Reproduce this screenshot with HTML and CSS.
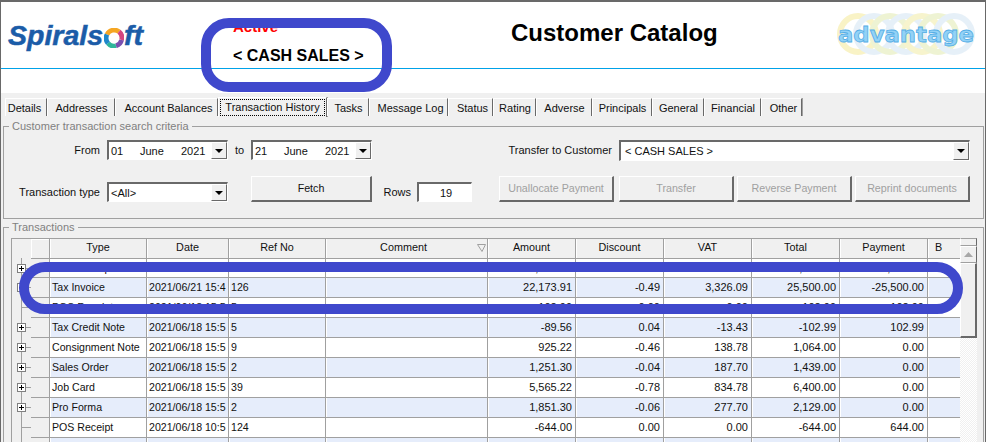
FILE: index.html
```html
<!DOCTYPE html>
<html lang="en">
<head>
<meta charset="utf-8">
<title>Customer Catalog</title>
<link rel="stylesheet" href="styles.css">
</head>
<body>
<div class="window">
  <header class="header">
    <div class="logo">Spirals<svg class="ring" width="20" height="20" viewBox="0 0 20 20"><g fill="none" stroke-width="4.8"><path d="M3 6.5A8 8 0 0 1 15 3.7" stroke="#f5a623"/><path d="M15 3.7A8 8 0 0 1 17.6 12" stroke="#d6457f"/><path d="M17.6 12A8 8 0 0 1 12 17.8" stroke="#7a4fb0"/><path d="M12 17.8A8 8 0 0 1 4 15.2" stroke="#2fb59a"/><path d="M4 15.2A8 8 0 0 1 3 6.5" stroke="#1e88c9"/></g></svg>ft</div>
    <div class="status">
      <div class="active">Active</div>
      <div class="customer">&lt; CASH SALES &gt;</div>
    </div>
    <h1 class="title">Customer Catalog</h1>
    <svg class="adv" width="144" height="42" viewBox="0 0 144 42">
      <g fill="none" stroke-width="6" opacity=".5">
        <circle cx="24" cy="21" r="18" stroke="#f4e88e"/>
        <circle cx="40" cy="21" r="18" stroke="#cfe3f3"/>
        <circle cx="56" cy="21" r="18" stroke="#dfe9a8"/>
        <circle cx="72" cy="21" r="18" stroke="#cfe3f3"/>
        <circle cx="88" cy="21" r="18" stroke="#f0ea9c"/>
        <circle cx="104" cy="21" r="18" stroke="#dfe9a8"/>
        <circle cx="120" cy="21" r="18" stroke="#cfe3f3"/>
      </g>
      <text class="adv-text" x="4" y="29" textLength="136" lengthAdjust="spacingAndGlyphs">advantage</text>
    </svg>
  </header>
  <div class="subhead"></div>

  <main class="main">
    <nav class="tabs">
      <span class="tab w42 shift-l">Details</span>
      <span class="tab w68">Addresses</span>
      <span class="tab w103 shift-r">Account Balances</span>
      <span class="tab w109 current"><span class="focus">Transaction History</span></span>
      <span class="tab w42">Tasks</span>
      <span class="tab w79 shift-r">Message Log</span>
      <span class="tab w45 shift-r">Status</span>
      <span class="tab w43">Rating</span>
      <span class="tab w56">Adverse</span>
      <span class="tab w60">Principals</span>
      <span class="tab w52">General</span>
      <span class="tab w57">Financial</span>
      <span class="tab w41 shift-r">Other</span>
    </nav>

    <section class="group criteria">
      <div class="legend">Customer transaction search criteria</div>
      <div class="row row-one">
        <label class="lbl w96">From</label>
        <div class="field w121"><span class="d">01</span><span class="m">June</span><span>2021</span><span class="drop"></span></div>
        <span class="to">to</span>
        <div class="field w121"><span class="d">21</span><span class="m">June</span><span>2021</span><span class="drop"></span></div>
        <label class="lbl w240">Transfer to Customer</label>
        <div class="field w351 tall"><span>&lt; CASH SALES &gt;</span><span class="drop"></span></div>
      </div>
      <div class="row row-two">
        <label class="lbl w96">Transaction type</label>
        <div class="field w121"><span>&lt;All&gt;</span><span class="drop"></span></div>
        <span class="to"></span>
        <button class="btn w121">Fetch</button>
        <label class="lbl w39">Rows</label>
        <div class="field input">19</div>
        <button class="btn w115 off">Unallocate Payment</button>
        <button class="btn w115 off g5">Transfer</button>
        <button class="btn w115 off g3">Reverse Payment</button>
        <button class="btn w115 off g3">Reprint documents</button>
      </div>
    </section>

    <section class="group transactions">
      <div class="legend">Transactions</div>
      <div class="grid-wrap">
        <table class="grid">
          <colgroup>
            <col class="c20"><col class="c18"><col class="c97"><col class="c82"><col class="c97"><col class="c162"><col class="c88"><col class="c88"><col class="c88"><col class="c88"><col class="c88"><col class="c33">
          </colgroup>
          <thead>
            <tr>
              <th class="tree-head"></th><th class="ind-head"></th><th>Type</th><th>Date</th><th>Ref No</th>
              <th class="has-filter">Comment<svg class="filter" width="9" height="8" viewBox="0 0 9 8"><path d="M.5.5h8L5 7.5z" fill="none" stroke="#a0a0a0"/></svg></th>
              <th>Amount</th><th>Discount</th><th>VAT</th><th>Total</th><th>Payment</th><th class="clip">B</th>
            </tr>
          </thead>
          <tbody>
            <tr class="first-row"><td class="tree"><span class="plus"></span></td><td class="ind"></td><td>POS Receipt</td><td>2021/06/21 15:4</td><td>125</td><td></td><td class="n">25,500.00</td><td class="n">0.00</td><td class="n">0.00</td><td class="n">25,500.00</td><td class="n">25,500.00</td><td></td></tr>
            <tr class="alt"><td class="tree"><span class="plus"></span></td><td class="ind"></td><td>Tax Invoice</td><td>2021/06/21 15:4</td><td>126</td><td></td><td class="n">22,173.91</td><td class="n">-0.49</td><td class="n">3,326.09</td><td class="n">25,500.00</td><td class="n">-25,500.00</td><td></td></tr>
            <tr><td class="tree"></td><td class="ind"></td><td>POS Receipt</td><td>2021/06/18 15:5</td><td>5</td><td></td><td class="n">-102.99</td><td class="n">0.00</td><td class="n">0.00</td><td class="n">-102.99</td><td class="n">102.99</td><td></td></tr>
            <tr class="alt"><td class="tree"><span class="plus"></span></td><td class="ind"></td><td>Tax Credit Note</td><td>2021/06/18 15:5</td><td>5</td><td></td><td class="n">-89.56</td><td class="n">0.04</td><td class="n">-13.43</td><td class="n">-102.99</td><td class="n">102.99</td><td></td></tr>
            <tr><td class="tree"><span class="plus"></span></td><td class="ind"></td><td>Consignment Note</td><td>2021/06/18 15:5</td><td>9</td><td></td><td class="n">925.22</td><td class="n">-0.46</td><td class="n">138.78</td><td class="n">1,064.00</td><td class="n">0.00</td><td></td></tr>
            <tr class="alt"><td class="tree"><span class="plus"></span></td><td class="ind"></td><td>Sales Order</td><td>2021/06/18 15:5</td><td>2</td><td></td><td class="n">1,251.30</td><td class="n">-0.04</td><td class="n">187.70</td><td class="n">1,439.00</td><td class="n">0.00</td><td></td></tr>
            <tr><td class="tree"><span class="plus"></span></td><td class="ind"></td><td>Job Card</td><td>2021/06/18 15:5</td><td>39</td><td></td><td class="n">5,565.22</td><td class="n">-0.78</td><td class="n">834.78</td><td class="n">6,400.00</td><td class="n">0.00</td><td></td></tr>
            <tr class="alt"><td class="tree"><span class="plus"></span></td><td class="ind"></td><td>Pro Forma</td><td>2021/06/18 15:5</td><td>2</td><td></td><td class="n">1,851.30</td><td class="n">-0.06</td><td class="n">277.70</td><td class="n">2,129.00</td><td class="n">0.00</td><td></td></tr>
            <tr><td class="tree"></td><td class="ind"></td><td>POS Receipt</td><td>2021/06/18 10:5</td><td>124</td><td></td><td class="n">-644.00</td><td class="n">0.00</td><td class="n">0.00</td><td class="n">-644.00</td><td class="n">644.00</td><td></td></tr>
            <tr class="alt"><td class="tree"></td><td class="ind"></td><td></td><td></td><td></td><td></td><td></td><td></td><td></td><td></td><td></td><td></td></tr>
          </tbody>
        </table>
        <div class="scroll">
          <div class="sb-cap"></div>
          <div class="sb-up"><svg width="9" height="5" viewBox="0 0 9 5"><path d="M4.5 0L9 5H0z" fill="#a8a8a8"/></svg></div>
          <div class="sb-thumb"></div>
          <div class="sb-track"></div>
        </div>
      </div>
    </section>
  </main>

  <div class="mark mark-name"></div>
  <div class="mark mark-row"></div>
</div>
</body>
</html>
```
FILE: styles.css
```css
* { box-sizing: border-box; }
html, body { margin: 0; padding: 0; background: #fff; }
body { width: 988px; height: 442px; overflow: hidden; font: 11px "Liberation Sans", Arial, sans-serif; color: #111; }

.window { position: relative; width: 986px; height: 442px; overflow: hidden; border-top: 2px solid #696969; border-left: 1px solid #696969; border-right: 1px solid #696969; display: flex; flex-direction: column; }

/* header */
.header { height: 66px; display: flex; align-items: flex-start; background: #fff; }
.logo { width: 232px; padding: 16px 0 0 7px; font: italic bold 28.5px/34px "Liberation Sans", sans-serif; color: #1b5ca8; white-space: nowrap; -webkit-text-stroke: .5px #1b5ca8; }
.ring { vertical-align: -3px; margin: 0 0 0 1px; }
.status { width: 278px; padding-top: 16px; }
.active { font: bold 15px/17px "Liberation Sans", sans-serif; color: #f00; }
.customer { margin-top: 11px; font: bold 16px/19px "Liberation Sans", sans-serif; color: #000; white-space: nowrap; }
.title { width: 323px; margin: 17px 0 0; font: bold 24px/28px "Liberation Sans", sans-serif; color: #000; white-space: nowrap; }
.adv { margin-top: 11px; }
.adv-text { font: bold 22px "DejaVu Sans", sans-serif; fill: #93d2f6; stroke: #55aee6; stroke-width: .8px; }
.subhead { height: 25px; border-top: 1px solid #00a2e8; background: #fff; flex: none; }

/* main */
.main { flex: 1; background: #f0f0f0; padding-top: 5px; min-height: 0; }
.tabs { display: flex; height: 18px; padding-left: 4px; margin-bottom: 10px; }
.tab { display: block; height: 18px; line-height: 18px; text-align: center; color: #111; white-space: nowrap; border-left: 1px solid #fff; border-top: 1px solid #fff; border-right: 1px solid #696969; box-shadow: 1px 0 0 #a0a0a0; padding-left: 1px; }
.shift-r { padding-left: 4px; }
.shift-l { padding-left: 0; padding-right: 3px; }
.tab.current { height: 20px; margin-top: -1px; line-height: 17px; padding: 1px; }
.focus { display: block; height: 17px; border: 1px dotted #000; line-height: 15px; }
.w41 { width: 41px; } .w42 { width: 42px; } .w43 { width: 43px; } .w45 { width: 45px; } .w52 { width: 52px; }
.w56 { width: 56px; } .w57 { width: 57px; } .w60 { width: 60px; } .w68 { width: 68px; } .w79 { width: 79px; }
.w103 { width: 103px; } .w109 { width: 109px; }

.group { margin: 0 1px 0 2px; border: 1px solid #a0a0a0; }
.legend { width: fit-content; margin: -7px 0 0 5px; padding: 0 3px; height: 13px; line-height: 13px; font-size: 11px; color: #808080; background: #f0f0f0; }
.criteria { height: 93px; margin-bottom: 8px; }
.transactions { height: 240px; border-bottom: 0; }

.row { display: flex; }
.row-one { height: 21px; margin-top: 7px; align-items: flex-start; }
.row-two { height: 26px; margin-top: 15px; align-items: flex-end; }
.lbl { text-align: right; white-space: nowrap; line-height: 20px; margin-right: 7px; font-size: 11px; }
.w96 { width: 96px; } .w240 { width: 240px; } .w39 { width: 39px; margin-right: 6px; }
.w121 { width: 121px; } .w351 { width: 351px; } .w115 { width: 115px; }
.to { width: 23px; text-align: center; line-height: 20px; font-size: 11px; }

.field { display: flex; align-items: center; height: 20px; padding-left: 2px; background: #fff; border-style: solid; border-width: 2px 1px 1px 2px; border-color: #696969 #fff #fff #696969; white-space: nowrap; }
.tall { height: 21px; padding-left: 4px; }
.d { width: 29px; } .m { width: 41px; }
.drop { margin-left: auto; width: 16px; height: 17px; background: #f0f0f0; border: 1px solid; border-color: #fff #696969 #696969 #fff; display: flex; align-items: center; justify-content: center; flex: none; }
.tall .drop { height: 18px; }
.drop::after { content: ""; border-left: 4px solid transparent; border-right: 4px solid transparent; border-top: 4px solid #000; }
.input { width: 55px; margin-right: 27px; justify-content: center; }

.btn { height: 26px; padding: 0 0 2px; font: 10.7px "Liberation Sans", sans-serif; color: #111; background: #f0f0f0; border-style: solid; border-width: 1px 2px 2px 1px; border-color: #fff #696969 #696969 #fff; }
.off { color: #a0a0a0; }
.g5 { margin-left: 5px; } .g3 { margin-left: 3px; }

/* grid */
.grid-wrap { display: flex; margin: 4px 0 0 7px; }
.grid { width: 949px; flex: none; table-layout: fixed; border-collapse: separate; border-spacing: 0; background: #fff; }
.c20 { width: 20px; } .c18 { width: 18px; } .c97 { width: 97px; } .c82 { width: 82px; } .c162 { width: 162px; } .c88 { width: 88px; } .c33 { width: 33px; }
.grid th { height: 20px; padding: 0 0 3px; font-weight: 400; font-size: 10.8px; text-align: center; background: #f0f0f0; border-top: 1px solid #a0a0a0; border-left: 1px solid #a0a0a0; box-shadow: inset 1px 0 0 #fff; position: relative; overflow: hidden; white-space: nowrap; }
.grid th.tree-head { box-shadow: none; }
.grid th.ind-head { border-left: 0; box-shadow: inset 1px 1px 0 #fff; }
.grid th.clip { text-align: left; padding-left: 7px; }
.grid th.has-filter { padding-right: 6px; }
.filter { position: absolute; right: 1px; top: 5px; }
.grid td { height: 20px; padding: 0 0 1px 2px; font-size: 10.6px; border-top: 1px solid #a0a0a0; border-left: 1px solid #a0a0a0; box-shadow: inset 1px 0 0 #fff; overflow: hidden; white-space: nowrap; background: #fff; }
.grid tr.first-row td { height: 19px; }
.grid tr.alt td { background: #e6edfb; }
.grid td.n { text-align: right; font-size: 11px; padding: 0 3px 1px 0; }
.grid tr td.ind { background: #f0f0f0; padding: 0; border-left: 0; box-shadow: none; }
.grid tr td.tree { position: relative; padding: 0; border-top: 0; box-shadow: none; background-color: #f0f0f0; background-image: linear-gradient(#a0a0a0, #a0a0a0), linear-gradient(#a0a0a0, #a0a0a0); background-size: 1px 100%, 11px 1px; background-position: 9px 0, 9px 10px; background-repeat: no-repeat; }
.plus { position: absolute; left: 5px; top: 6px; width: 9px; height: 9px; border: 1px solid #808080; background-color: #fff; background-image: linear-gradient(#000, #000), linear-gradient(#000, #000); background-size: 5px 1px, 1px 5px; background-position: center, center; background-repeat: no-repeat; }

.scroll { width: 17px; flex: none; display: flex; flex-direction: column; height: 205px; }
.sb-cap { height: 8px; background: #f0f0f0; border: 1px solid; border-color: #a0a0a0 #696969 #a0a0a0 #fff; }
.sb-up { height: 17px; display: flex; align-items: center; justify-content: center; background: #f0f0f0; border: 1px solid; border-color: #fff #696969 #a0a0a0 #fff; }
.sb-thumb { height: 75px; background: #f0f0f0; border-style: solid; border-width: 1px 2px 2px 1px; border-color: #fff #696969 #696969 #fff; }
.sb-track { flex: 1; background-color: #f6f6f6; background-image: repeating-conic-gradient(#f0f0f0 0 25%, #fff 0 50%); background-size: 2px 2px; }

/* annotation drawn over the screenshot */
.mark { position: absolute; border: 10px solid #3f48cc; z-index: 5; }
.mark-name { left: 200px; top: 16px; width: 191px; height: 74px; border-radius: 28px; }
.mark-row { left: 18px; top: 260px; width: 944px; height: 52px; border-radius: 26px; }
```
